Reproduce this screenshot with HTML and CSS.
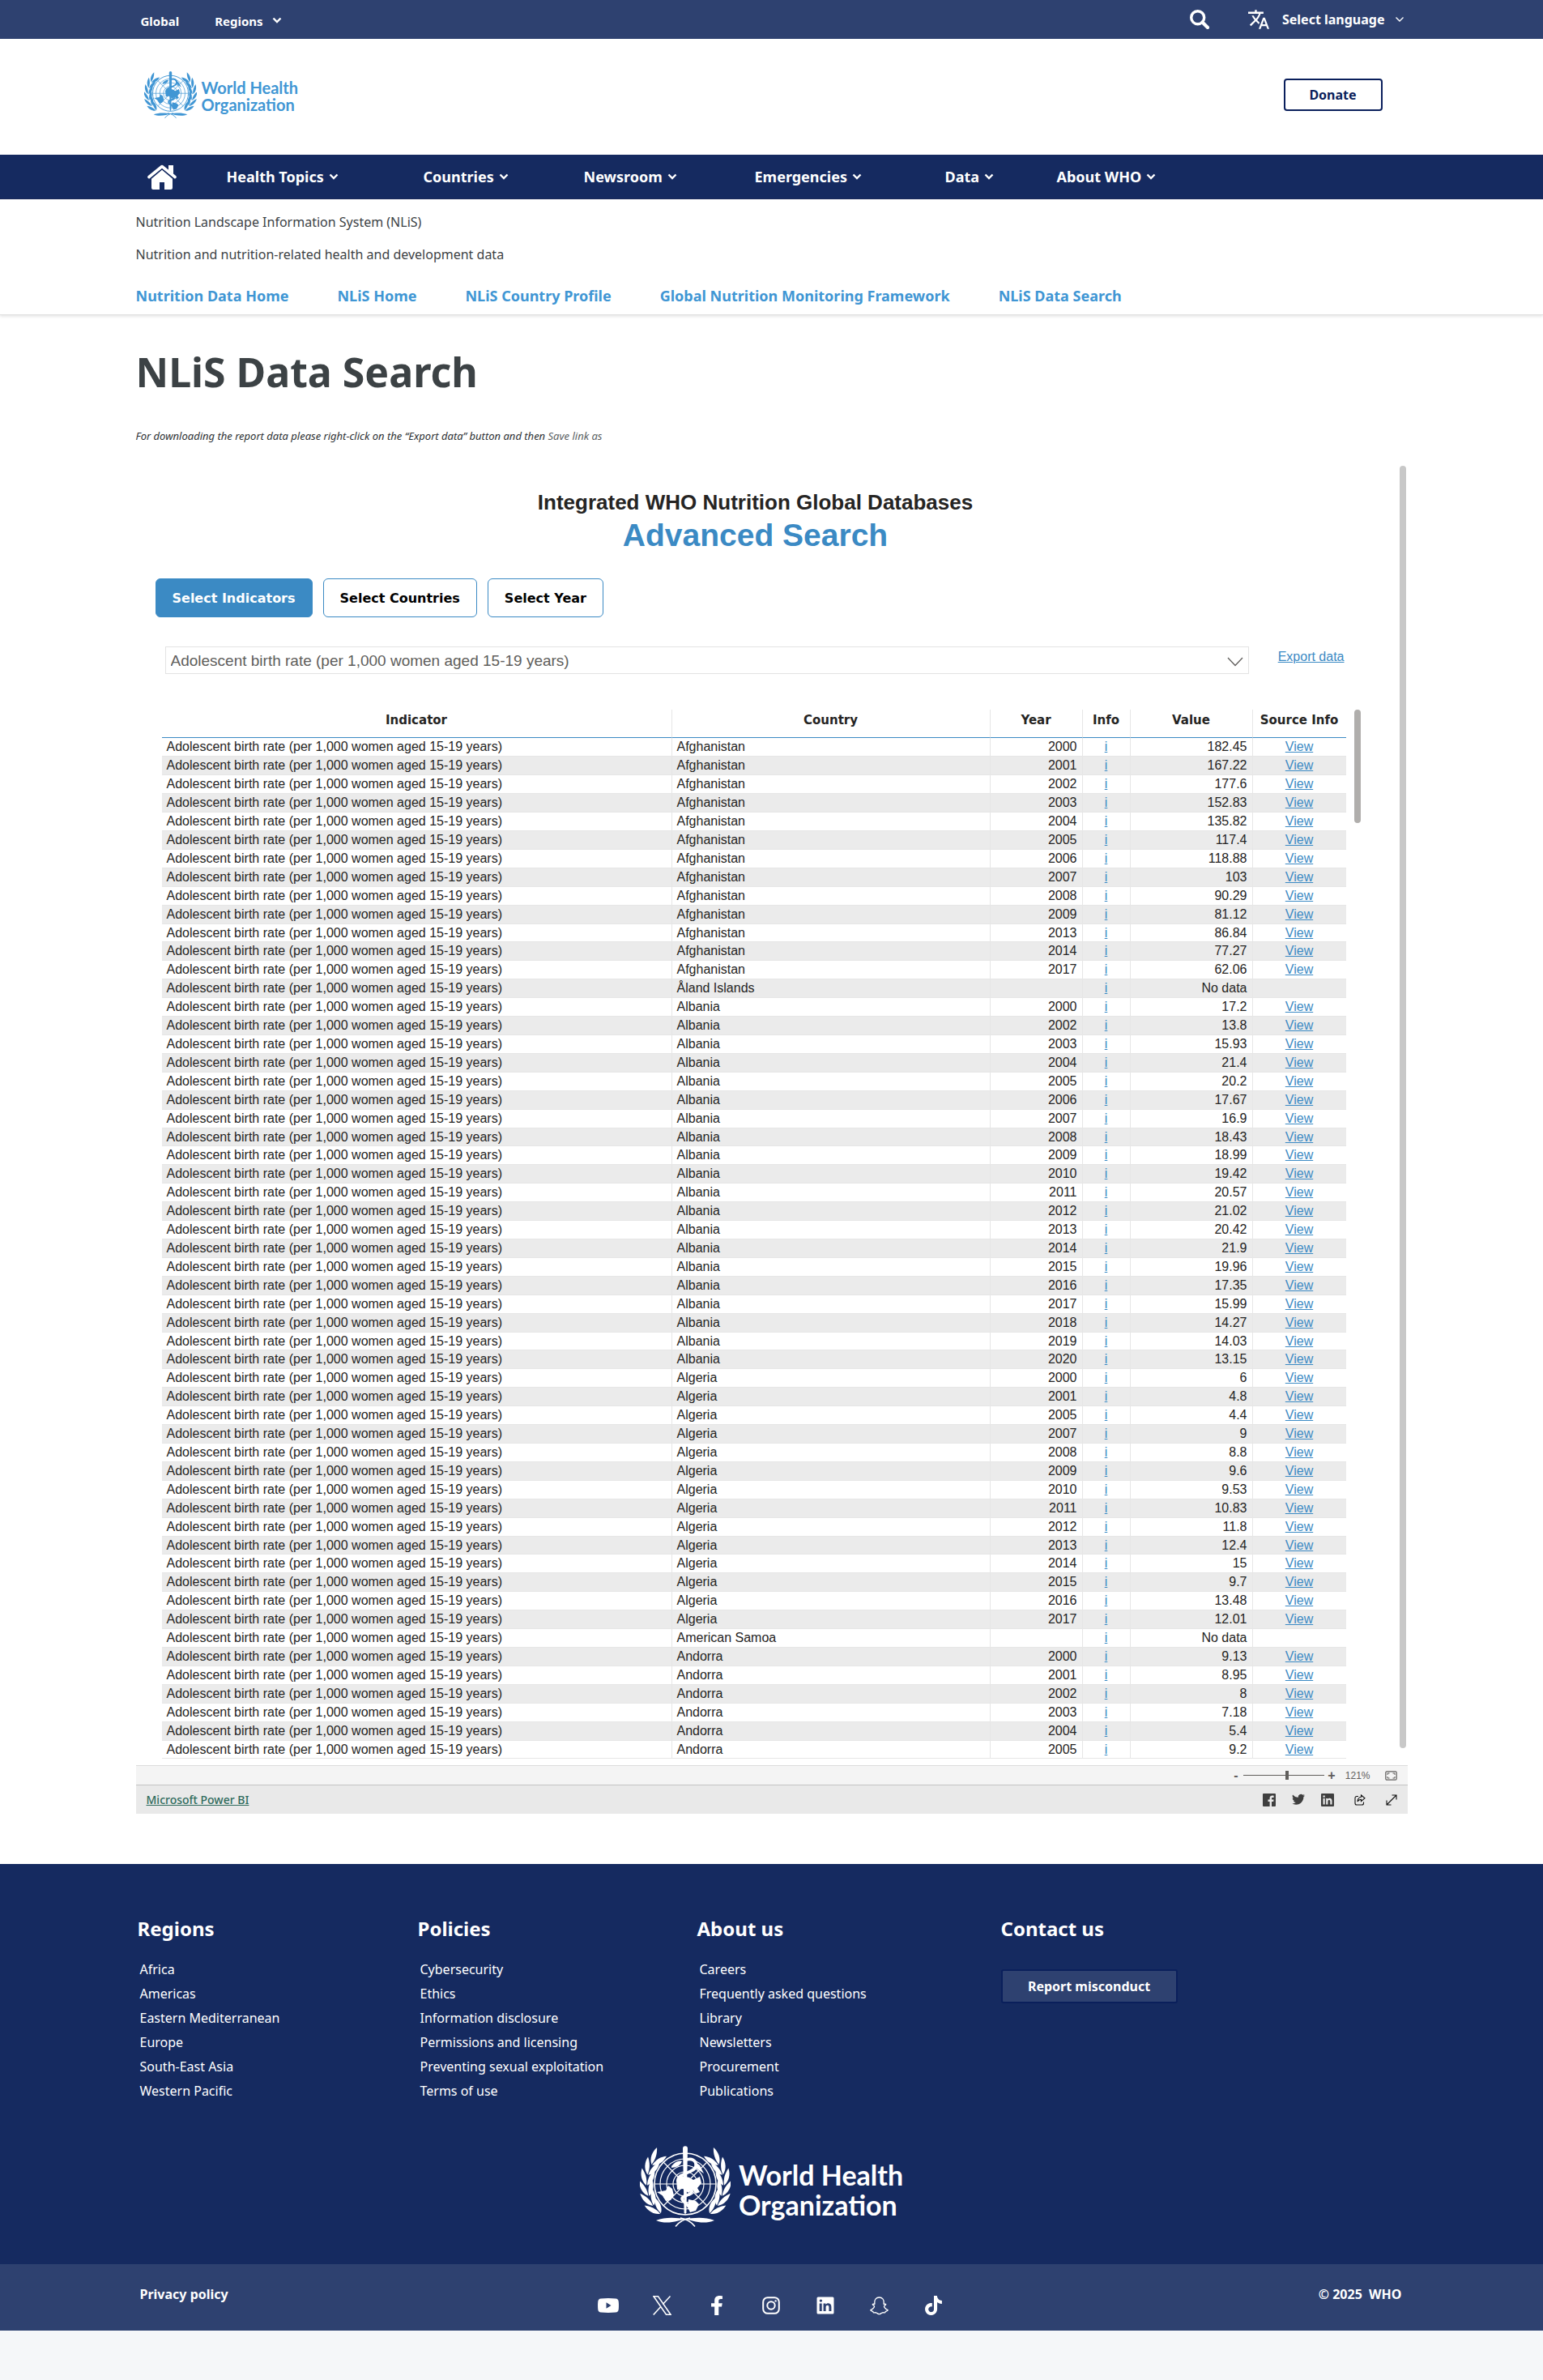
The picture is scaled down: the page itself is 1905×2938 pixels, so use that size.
FILE: index.html
```html
<!DOCTYPE html>
<html lang="en">
<head>
<meta charset="utf-8">
<meta name="viewport" content="width=device-width, initial-scale=1">
<title>NLiS Data Search</title>
<link rel="stylesheet" href="styles.css">
</head>
<body>
<svg class="sprite" aria-hidden="true">
  <symbol id="chevron" viewBox="0 0 12 8"><path d="M1.5 1.5 6 6l4.5-4.5" fill="none" stroke="currentColor" stroke-width="2.4"/></symbol>
  <symbol id="chevron-thin" viewBox="0 0 12 8"><path d="M1.5 1.5 6 6l4.5-4.5" fill="none" stroke="currentColor" stroke-width="1.4"/></symbol>
  <symbol id="leaves" viewBox="0 0 112 100" overflow="visible">
    <path d="M9 57C2 53-1 45 0 37C5 42 9 49 9 57Z"/>
    <path d="M10 57C9 49 11 42 16 37C18 45 16 53 10 57Z"/>
  </symbol>
  <symbol id="branch" viewBox="0 0 112 100" overflow="visible">
    <use href="#leaves" width="112" height="100" transform="rotate(42 56 47)"/>
    <use href="#leaves" width="112" height="100" transform="rotate(26 56 47)"/>
    <use href="#leaves" width="112" height="100" transform="rotate(10 56 47)"/>
    <use href="#leaves" width="112" height="100" transform="rotate(-6 56 47)"/>
    <use href="#leaves" width="112" height="100" transform="rotate(-22 56 47)"/>
    <use href="#leaves" width="112" height="100" transform="rotate(-38 56 47)"/>
    <path d="M20 92C32 87 46 89 57 90C48 92 34 98 20 92Z"/>
    <path d="M44 99.500C48 94 54 90.500 62 89" fill="none" stroke="currentColor" stroke-width="1.600"/>
  </symbol>
  <symbol id="emblem" viewBox="0 0 112 100">
    <g fill="currentColor">
      <use href="#branch" width="112" height="100"/>
      <use href="#branch" width="112" height="100" transform="translate(112 0) scale(-1 1)"/>
      <g fill="none" stroke="currentColor">
        <circle cx="56" cy="47" r="38" stroke-width="1.600"/>
        <circle cx="56" cy="47" r="31" stroke-width="1.200"/>
        <circle cx="56" cy="47" r="23" stroke-width="1.200"/>
        <circle cx="56" cy="47" r="15" stroke-width="1.200"/>
        <path d="M18 47h76M29 20l54 54M83 20 29 74M56 9v76" stroke-width="1.200"/>
      </g>
      <path d="M39 25q7-8 13-6-2 7-13 8zM66 18l8 6 5 10-9-6zM21 57l11-2 3-6 5 4 2 8-4 6-6 1-3-6zM45 42l7-5 9 2 5 3 8-4 2 8-5 6 3 5-5 2-4-5-5 4-7-5-7 1zM60 66l9 2 4 4-4 8-7 2-3-6z"/>
      <path d="M53 3.200a3 3 0 0 1 6 0L57.400 83h-2.800z"/>
      <path d="M55 18c9-4 15 0 14 7-1 9-23 8-22 18 1 8 18 5 17 13-1 6-11 4-12 9 0 4 6 5 8 10" fill="none" stroke="currentColor" stroke-width="3.600"/>
    </g>
  </symbol>
</svg>

<header>
  <div class="topbar">
    <div class="wrap topbar-row">
      <nav class="topbar-left" aria-label="Regions">
        <a href="#">Global</a>
        <a href="#">Regions <svg class="chev" width="12" height="8"><use href="#chevron"/></svg></a>
      </nav>
      <div class="topbar-right">
        <button class="icon-button" aria-label="Search"><svg width="24" height="24" viewBox="0 0 24 24" fill="none" stroke="currentColor"><circle cx="9.700" cy="9.700" r="8" stroke-width="3.400"/><path d="m15.500 15.500 6.500 6.500" stroke-width="4.200" stroke-linecap="round"/></svg></button>
        <button class="language">
          <svg width="26" height="24" viewBox="1 2 22 20" fill="currentColor"><path d="M12.870 15.070l-2.540-2.510.03-.03c1.740-1.940 2.980-4.170 3.710-6.530H17V4h-7V2H8v2H1v1.990h11.170C11.500 7.920 10.440 9.750 9 11.350 8.070 10.320 7.300 9.190 6.690 8h-2c.73 1.630 1.730 3.170 2.980 4.560l-5.090 5.020L4 19l5-5 3.110 3.110.76-2.040zM18.500 10h-2L12 22h2l1.120-3h4.750L21 22h2l-4.500-12zm-2.620 7l1.620-4.330L19.120 17h-3.240z"/></svg>
          <span>Select language</span>
          <svg width="12" height="8"><use href="#chevron-thin"/></svg>
        </button>
      </div>
    </div>
  </div>
  <div class="wrap brand">
    <a class="brand-logo" href="#"><svg width="65" height="58"><use href="#emblem"/></svg><span>World Health<br>Organization</span></a>
    <button class="donate">Donate</button>
  </div>
  <div class="mainbar">
    <nav class="wrap mainnav" aria-label="Main">
      <a class="home" href="#" aria-label="Home"><svg width="36" height="31" viewBox="0 0 36 31"><g fill="#fff"><path d="M26 1h6v11l-6-5z"/><path d="M5 17.500 18 6.500l13 11V29a2 2 0 0 1-2 2h-8v-9h-6v9H7a2 2 0 0 1-2-2z"/></g><path d="M2 15.500 18 2.500l16 13" fill="none" stroke="#fff" stroke-width="3.600" stroke-linecap="round" stroke-linejoin="round"/><path d="M4 17.500 18 5.800l14 11.700" fill="none" stroke="#152a60" stroke-width="1.200"/></svg></a>
      <a href="#">Health Topics <svg width="12" height="8"><use href="#chevron"/></svg></a>
      <a href="#">Countries <svg width="12" height="8"><use href="#chevron"/></svg></a>
      <a href="#">Newsroom <svg width="12" height="8"><use href="#chevron"/></svg></a>
      <a href="#">Emergencies <svg width="12" height="8"><use href="#chevron"/></svg></a>
      <a href="#">Data <svg width="12" height="8"><use href="#chevron"/></svg></a>
      <a href="#">About WHO <svg width="12" height="8"><use href="#chevron"/></svg></a>
    </nav>
  </div>
  <div class="subhead">
    <div class="wrap">
      <p>Nutrition Landscape Information System (NLiS)</p>
      <p>Nutrition and nutrition-related health and development data</p>
      <nav class="subnav" aria-label="Section">
        <a href="#">Nutrition Data Home</a>
        <a href="#">NLiS Home</a>
        <a href="#">NLiS Country Profile</a>
        <a href="#">Global Nutrition Monitoring Framework</a>
        <a href="#">NLiS Data Search</a>
      </nav>
    </div>
  </div>
</header>

<main>
  <div class="wrap">
    <h1>NLiS Data Search</h1>
    <p class="note">For downloading the report data please right-click on the “Export data” button and then <span>Save link as</span></p>

    <section class="report">
      <div class="report-body">
        <div class="report-main">
          <div class="report-head">
            <h2>Integrated WHO Nutrition Global Databases</h2>
            <p>Advanced Search</p>
          </div>
          <div class="tabs">
            <button class="tab active">Select Indicators</button>
            <button class="tab">Select Countries</button>
            <button class="tab">Select Year</button>
          </div>
          <div class="filter">
            <div class="select-box">
              <select aria-label="Indicator"><option>Adolescent birth rate (per 1,000 women aged 15-19 years)</option></select>
              <svg width="20" height="12" viewBox="0 0 20 12" fill="none" stroke="#605e5c" stroke-width="1.300"><path d="m1 1 9 9.500L19 1"/></svg>
            </div>
            <a href="#">Export data</a>
          </div>
          <div class="table-area">
            <table>
              <colgroup><col><col class="c-country"><col class="c-year"><col class="c-info"><col class="c-value"><col class="c-source"></colgroup>
              <thead><tr><th>Indicator</th><th>Country</th><th>Year</th><th>Info</th><th>Value</th><th>Source Info</th></tr></thead>
              <tbody id="rows"></tbody>
            </table>
            <div class="thumb"></div>
          </div>
        </div>
        <div class="page-scroll"></div>
      </div>
      <div class="zoombar">
        <button class="zoom-step" aria-label="Zoom out">-</button>
        <input type="range" min="0" max="100" value="54" aria-label="Zoom">
        <button class="zoom-step" aria-label="Zoom in">+</button>
        <span>121%</span>
        <button class="icon-button" aria-label="Fit to page"><svg width="15" height="12" viewBox="0 0 15 12" fill="none" stroke="#605e5c"><rect x=".8" y=".8" width="13.400" height="10.400" rx="1.500" stroke-width="1.200"/><path d="M3 5V3h2.500M9.500 3H12v2M12 7v2H9.500M5.500 9H3V7"/></svg></button>
      </div>
      <div class="powerbi">
        <a href="#">Microsoft Power BI</a>
        <div class="share">
          <button class="icon-button" aria-label="Facebook"><svg width="16" height="16" viewBox="0 0 16 16"><rect width="16" height="16" rx="1" fill="#3f3f3f"/><path d="M11 16v-6h2.200l.3-2.400H11V6.200c0-.8.300-1.200 1.200-1.200h1.400V2.700c-3-.5-5 .4-5 3v1.900H6.500V10h2.100v6z" fill="#e9e9e9"/></svg></button>
          <button class="icon-button" aria-label="Twitter"><svg width="16" height="16" viewBox="0 1 24 24" fill="#3f3f3f"><path d="M23.953 4.570a10 10 0 01-2.825.775 4.958 4.958 0 002.163-2.723c-.951.555-2.005.959-3.127 1.184a4.920 4.920 0 00-8.384 4.482C7.690 8.095 4.067 6.130 1.640 3.162a4.822 4.822 0 00-.666 2.475c0 1.710.87 3.213 2.188 4.096a4.904 4.904 0 01-2.228-.616v.06a4.923 4.923 0 003.946 4.827 4.996 4.996 0 01-2.212.085 4.936 4.936 0 004.604 3.417 9.867 9.867 0 01-6.102 2.105c-.39 0-.779-.023-1.170-.067a13.995 13.995 0 007.557 2.209c9.053 0 13.998-7.496 13.998-13.985 0-.21 0-.42-.015-.63A9.935 9.935 0 0024 4.590z"/></svg></button>
          <button class="icon-button" aria-label="LinkedIn"><svg width="16" height="16" viewBox="0 0 16 16"><rect width="16" height="16" rx="1" fill="#3f3f3f"/><path d="M2.500 6h2.200v7.500H2.500zM2.500 2.500h2.200v2.200H2.500zM6.200 6h2.100v1c1-1.700 5.200-1.800 5.200 2v4.500h-2.200V9.700c0-2.500-2.900-2.200-2.900 0v3.800H6.200z" fill="#e9e9e9"/></svg></button>
          <button class="icon-button" aria-label="Share"><svg width="14" height="14" viewBox="0 0 14 14" fill="none" stroke="#111" stroke-width="1.100"><path d="M5 2.500H3a2 2 0 0 0-2 2V11a2 2 0 0 0 2 2h6.500a2 2 0 0 0 2-2V9.500"/><path d="M8.500 1 13 4.800 8.500 8.500V6.400C6.500 6.400 5 7.300 4 9c.2-3.200 1.600-5.400 4.500-5.800z"/></svg></button>
          <button class="icon-button" aria-label="Full screen"><svg width="14" height="14" viewBox="0 0 14 14" fill="none" stroke="#111" stroke-width="1.100"><path d="m1.500 12.500 11-11M7.500 1H13v5.500M1 7.500V13h5.500"/></svg></button>
        </div>
      </div>
    </section>
  </div>
</main>

<footer>
  <div class="foot-main">
    <div class="wrap foot-cols">
      <section><h3>Regions</h3><ul><li><a href="#">Africa</a></li><li><a href="#">Americas</a></li><li><a href="#">Eastern Mediterranean</a></li><li><a href="#">Europe</a></li><li><a href="#">South-East Asia</a></li><li><a href="#">Western Pacific</a></li></ul></section>
      <section><h3>Policies</h3><ul><li><a href="#">Cybersecurity</a></li><li><a href="#">Ethics</a></li><li><a href="#">Information disclosure</a></li><li><a href="#">Permissions and licensing</a></li><li><a href="#">Preventing sexual exploitation</a></li><li><a href="#">Terms of use</a></li></ul></section>
      <section><h3>About us</h3><ul><li><a href="#">Careers</a></li><li><a href="#">Frequently asked questions</a></li><li><a href="#">Library</a></li><li><a href="#">Newsletters</a></li><li><a href="#">Procurement</a></li><li><a href="#">Publications</a></li></ul></section>
      <section><h3>Contact us</h3><button class="report-button">Report misconduct</button></section>
    </div>
    <a class="foot-logo" href="#"><svg width="112" height="100"><use href="#emblem"/></svg><span>World Health<br>Organization</span></a>
  </div>
  <div class="foot-bar">
    <div class="wrap foot-row">
      <a href="#">Privacy policy</a>
      <nav class="social" aria-label="Social media">
        <a href="#" aria-label="YouTube"><svg width="26" height="18" viewBox="0 0 26 18"><path d="M4 .4Q13-.4 22 .4q3.400.3 3.700 3.600.5 5 0 10-.3 3.300-3.700 3.600-9 .8-18 0Q.6 17.300.3 14q-.5-5 0-10Q.6.700 4 .4zM10.500 5.300v7.400L16.500 9z" fill="#fff" fill-rule="evenodd"/></svg></a>
        <a href="#" aria-label="X"><svg width="23" height="24" viewBox="0 0 23 24" fill="none" stroke="#fff" stroke-width="1.500"><path d="M1 .8h5.500L22 23.200h-5.500zM21.500.5l-9.300 10.300M9.800 13.500.7 23.600"/></svg></a>
        <a href="#" aria-label="Facebook"><svg width="14" height="24" viewBox="22 0 276 512" preserveAspectRatio="none" fill="#fff"><path d="M279.140 288l14.220-92.660h-88.910v-60.130c0-25.350 12.420-50.060 52.240-50.060h40.420V6.260S260.430 0 225.360 0c-73.220 0-121.080 44.380-121.080 124.720v70.620H22.890V288h81.390v224h100.170V288z"/></svg></a>
        <a href="#" aria-label="Instagram"><svg width="22" height="22" viewBox="0 0 22 22" fill="none" stroke="#fff" stroke-width="2"><rect x="1.200" y="1.200" width="19.600" height="19.600" rx="5.500"/><circle cx="11" cy="11" r="4.700"/><circle cx="16.600" cy="5.400" r="1.200" fill="#fff" stroke="none"/></svg></a>
        <a href="#" aria-label="LinkedIn"><svg width="22" height="22" viewBox="0 0 22 22"><rect x=".5" y=".5" width="21" height="21" rx="1.500" fill="#fff"/><path d="M3.700 8.500h3V18h-3zM3.700 5.100a1.700 1.700 0 1 1 3.400 0 1.700 1.700 0 0 1-3.400 0zM8.600 8.500h2.800v1.300c1.500-2.400 7-2.300 7 2.800V18h-3v-4.900c0-3.200-3.800-2.900-3.800 0V18h-3z" fill="#2e4170"/></svg></a>
        <a href="#" aria-label="Snapchat"><svg width="23" height="23" viewBox="0 0 23 23" fill="none" stroke="#fff" stroke-width="1.300" stroke-linejoin="round"><path d="M11.500 1C7.500 1 5.700 3.800 5.800 7l.1 2.200c-.6.400-2.200-.5-2.600.4-.3 1 2 1.300 2.200 2.200.3 1.500-2.500 4.300-4.700 4.800-.2 1.200 2.600 1.400 3 1.900.3.500.1 1.200.6 1.300 1 .2 2.500-.5 4 .4 1.200.8 1.900 1.500 3.100 1.500s1.900-.7 3.100-1.500c1.500-.9 3-.2 4-.4.5-.1.300-.8.6-1.300.4-.5 3.200-.7 3-1.900-2.200-.5-5-3.300-4.700-4.800.2-.9 2.500-1.200 2.200-2.200-.4-.9-2 0-2.600-.4l.1-2.200c.1-3.200-1.700-6-5.700-6z"/></svg></a>
        <a href="#" aria-label="TikTok"><svg width="21" height="24" viewBox="1.500 0 21 24" fill="#fff"><path d="M12.525.02c1.310-.02 2.610-.01 3.910-.02.08 1.530.63 3.090 1.750 4.170 1.120 1.110 2.700 1.620 4.240 1.790v4.030c-1.440-.05-2.890-.35-4.200-.97-.57-.26-1.100-.59-1.620-.93-.01 2.920.01 5.840-.02 8.750-.08 1.400-.54 2.790-1.350 3.940-1.310 1.920-3.580 3.170-5.910 3.210-1.430.08-2.860-.31-4.080-1.030-2.020-1.190-3.440-3.370-3.650-5.710-.02-.5-.03-1-.01-1.490.18-1.900 1.120-3.720 2.580-4.960 1.660-1.440 3.980-2.130 6.150-1.720.02 1.480-.04 2.960-.04 4.440-.99-.32-2.150-.23-3.020.37-.63.41-1.110 1.040-1.360 1.750-.21.51-.15 1.070-.14 1.610.24 1.640 1.820 3.020 3.500 2.870 1.120-.01 2.190-.66 2.770-1.610.19-.33.4-.67.41-1.060.1-1.790.06-3.570.07-5.360.01-4.030-.01-8.050.02-12.070z"/></svg></a>
      </nav>
      <span class="copyright">© 2025 &nbsp;WHO</span>
    </div>
  </div>
</footer>
<script src="table.js"></script>
</body>
</html>
```
FILE: table.js
```js
// Country -> list of [year, value]; an empty year means the country has no data.
const data = {
  "Afghanistan": [[2000, 182.45], [2001, 167.22], [2002, 177.6], [2003, 152.83], [2004, 135.82], [2005, 117.4], [2006, 118.88], [2007, 103], [2008, 90.29], [2009, 81.12], [2013, 86.84], [2014, 77.27], [2017, 62.06]],
  "Åland Islands": [["", "No data"]],
  "Albania": [[2000, 17.2], [2002, 13.8], [2003, 15.93], [2004, 21.4], [2005, 20.2], [2006, 17.67], [2007, 16.9], [2008, 18.43], [2009, 18.99], [2010, 19.42], [2011, 20.57], [2012, 21.02], [2013, 20.42], [2014, 21.9], [2015, 19.96], [2016, 17.35], [2017, 15.99], [2018, 14.27], [2019, 14.03], [2020, 13.15]],
  "Algeria": [[2000, 6], [2001, 4.8], [2005, 4.4], [2007, 9], [2008, 8.8], [2009, 9.6], [2010, 9.53], [2011, 10.83], [2012, 11.8], [2013, 12.4], [2014, 15], [2015, 9.7], [2016, 13.48], [2017, 12.01]],
  "American Samoa": [["", "No data"]],
  "Andorra": [[2000, 9.13], [2001, 8.95], [2002, 8], [2003, 7.18], [2004, 5.4], [2005, 9.2]]
};
const indicator = document.querySelector("select").value;
document.getElementById("rows").innerHTML = Object.entries(data).flatMap(([country, entries]) =>
  entries.map(([year, value]) =>
    `<tr><td>${indicator}</td><td>${country}</td><td>${year}</td><td><a href="#">i</a></td><td>${value}</td><td>${year ? '<a href="#">View</a>' : ""}</td></tr>`)
).join("");
```
FILE: styles.css
```css
:root {
  --navy: #152a60;
  --slate: #2e4170;
  --blue: #3b8ac4;
  --sans: "Noto Sans", "Open Sans", sans-serif;
  --arial: "Liberation Sans", Arial, sans-serif;
  --black: "DejaVu Sans", Verdana, sans-serif;
}
* { box-sizing: border-box; }
body { margin: 0; background: #f5f7f9; color: #3c4245; font: 16px/24px var(--sans); }
h1, h2, h3, p, ul { margin: 0; padding: 0; }
ul { list-style: none; }
a { color: inherit; text-decoration: none; }
svg { display: block; flex: none; }
button { margin: 0; padding: 0; border: 0; background: none; color: inherit; font: inherit; cursor: pointer; }
.sprite { position: absolute; width: 0; height: 0; }
.wrap { max-width: 1570px; margin: 0 auto; }
.icon-button { display: flex; }

.topbar { background: var(--slate); color: #fff; font-weight: 700; }
.topbar-row { display: flex; justify-content: space-between; min-height: 48px; padding: 0 4px 0 6px; }
.topbar-left { display: flex; gap: 44px; padding-top: 14px; font-size: 15px; }
.topbar-left a { display: flex; gap: 11px; }
.chev { margin-top: 7px; }
.topbar-right { display: flex; align-items: center; gap: 48px; }
.language { display: flex; align-items: center; gap: 16px; }
.language span { margin-right: -4px; }

.brand { display: flex; justify-content: space-between; align-items: center; padding: 40px 31px 45px 10px; }
header, main { background: #fff; }
.brand-logo { display: flex; gap: 6px; color: #4096d4; font: 700 20px/21px Lato, sans-serif; }
.brand-logo span { padding-top: 10px; }
.donate { width: 122px; height: 40px; border: 2px solid #0a1f5c; border-radius: 4px; color: #0a1f5c; font-weight: 700; }

.mainbar { background: var(--navy); border-bottom: 1px solid #0f1f52; }
.mainnav { display: grid; grid-template-columns: 98px 243px 198px 211px 235px 138px 1fr; align-items: center; height: 54px; padding-left: 14px; color: #fff; font-size: 18px; font-weight: 700; }
.mainnav a { display: flex; align-items: center; gap: 6px; }

.subhead { padding: 16px 0 11px; border-bottom: 1px solid #e0e0e0; box-shadow: 0 2px 3px #e8e8e8; position: relative; }
.subhead p { margin-bottom: 16px; }
.subnav { display: flex; flex-wrap: wrap; gap: 60px; margin-top: 27px; color: #4096d4; font-size: 18px; font-weight: 700; }

main { padding: 40px 0 62px; }
h1 { font-size: 50px; line-height: 60px; }
.note { margin: 39px 0 27px; font-size: 13px; line-height: 20px; font-style: italic; color: #2c3033; }
.note span { color: #5a5f63; }

.report { color: #252423; font-family: var(--arial); }
.report-body { display: flex; }
.report-main { flex: 1; padding: 30px 48px 8px 24px; }
.page-scroll { width: 8px; margin: 0 2px 21px 0; border-radius: 4px; background: #c8c8c8; }
.report-head { padding-right: 6px; text-align: center; }
.report-head h2 { font-size: 26px; line-height: 30px; }
.report-head p { margin-top: 4px; color: var(--blue); font-size: 39px; font-weight: 700; line-height: 44px; }
.tabs { display: flex; gap: 13px; margin-top: 31px; }
.tab { height: 48px; padding: 0 20px; border: 1px solid var(--blue); border-radius: 6px; color: #000; font: 700 16px var(--black); }
.tab.active { background: var(--blue); color: #fff; }
.filter { display: flex; align-items: flex-start; gap: 36px; margin-top: 36px; padding: 0 20px 0 12px; }
.filter a { color: var(--blue); line-height: 26px; text-decoration: underline; }
.select-box { position: relative; flex: 1; }
.select-box select { display: block; width: 100%; height: 34px; padding: 0 6px; border: 1px solid #e3e3e3; border-radius: 0; background: #fff; color: #605e5c; font: 19px var(--arial); appearance: none; }
.select-box svg { position: absolute; right: 7px; top: 13px; pointer-events: none; }

.table-area { display: flex; gap: 10px; margin: 44px 0 0 8px; }
.thumb { width: 8px; height: 140px; border-radius: 4px; background: #b0aeac; }
table { flex: 1; table-layout: fixed; border-collapse: separate; border-spacing: 0; font-size: 16px; line-height: 20px; }
.c-country { width: 393px; }
.c-year { width: 114px; }
.c-info { width: 59px; }
.c-value { width: 151px; }
.c-source { width: 115px; }
th { height: 35px; padding: 3px 0 0; border-right: 1px solid #e6e6e6; border-bottom: 1px solid var(--blue); font: 700 15px/20px var(--black); vertical-align: top; }
td { height: 23px; padding: 0 6px; border-right: 1px solid #e6e6e6; border-bottom: 1px solid #e6e6e6; white-space: nowrap; }
tr > :last-child { border-right: 0; }
tbody tr:nth-child(even) { background: #ebebeb; }
tbody tr:nth-child(11n) td { height: 22px; }
td:nth-child(3), td:nth-child(5) { text-align: right; }
td:nth-child(4), td:nth-child(6) { text-align: center; }
td a { color: var(--blue); text-decoration: underline; }

.zoombar { display: flex; align-items: center; justify-content: flex-end; height: 24px; padding-right: 13px; border-top: 1px solid #dcdcdc; background: #f4f4f4; color: #605e5c; font-size: 12px; }
.zoom-step { width: 14px; font-weight: 700; font-size: 16px; line-height: 20px; }
.zoombar span { margin: 0 18px 0 10px; }
.zoombar input { width: 100px; height: 12px; margin: 0 2px; appearance: none; background: linear-gradient(#605e5c, #605e5c) center / 100% 1px no-repeat; }
.zoombar input::-webkit-slider-thumb { appearance: none; width: 4px; height: 11px; background: #605e5c; }
.powerbi { display: flex; align-items: center; justify-content: space-between; height: 36px; padding: 0 13px; border-top: 1px solid #c4c4c4; background: #e9e9e9; font: 500 14px/20px var(--sans); }
.powerbi > a { color: #2f6b5c; text-decoration: underline; }
.share { display: flex; align-items: center; gap: 20px; }
.share > :nth-last-child(-n+2) { margin-left: 5px; }

.foot-main { padding: 63px 0 46px; background: var(--navy); color: #fff; }
.foot-cols { display: grid; grid-template-columns: 346px 345px 375px 1fr; padding-left: 2px; }
.foot-cols h3 { font-size: 24px; line-height: 34px; }
.foot-cols ul { margin-top: 18px; padding-left: 3px; line-height: 30px; }
.report-button { width: 218px; height: 42px; margin-top: 33px; border: 2px solid #0a1f5b; border-radius: 3px; background: var(--slate); font-weight: 700; }
.foot-logo { display: flex; justify-content: center; gap: 10px; margin-top: 53px; font: 700 34px/37px Lato, sans-serif; }
.foot-logo span { padding-top: 17px; }
.foot-bar { background: var(--slate); color: #fff; font-weight: 700; }
.foot-row { display: grid; grid-template-columns: 1fr auto 1fr; padding: 25px 7px 0 5px; min-height: 82px; }
.social { display: flex; padding-top: 10px; }
.social a { display: flex; justify-content: center; align-items: center; width: 67px; height: 32px; }
.copyright { text-align: right; }
```
